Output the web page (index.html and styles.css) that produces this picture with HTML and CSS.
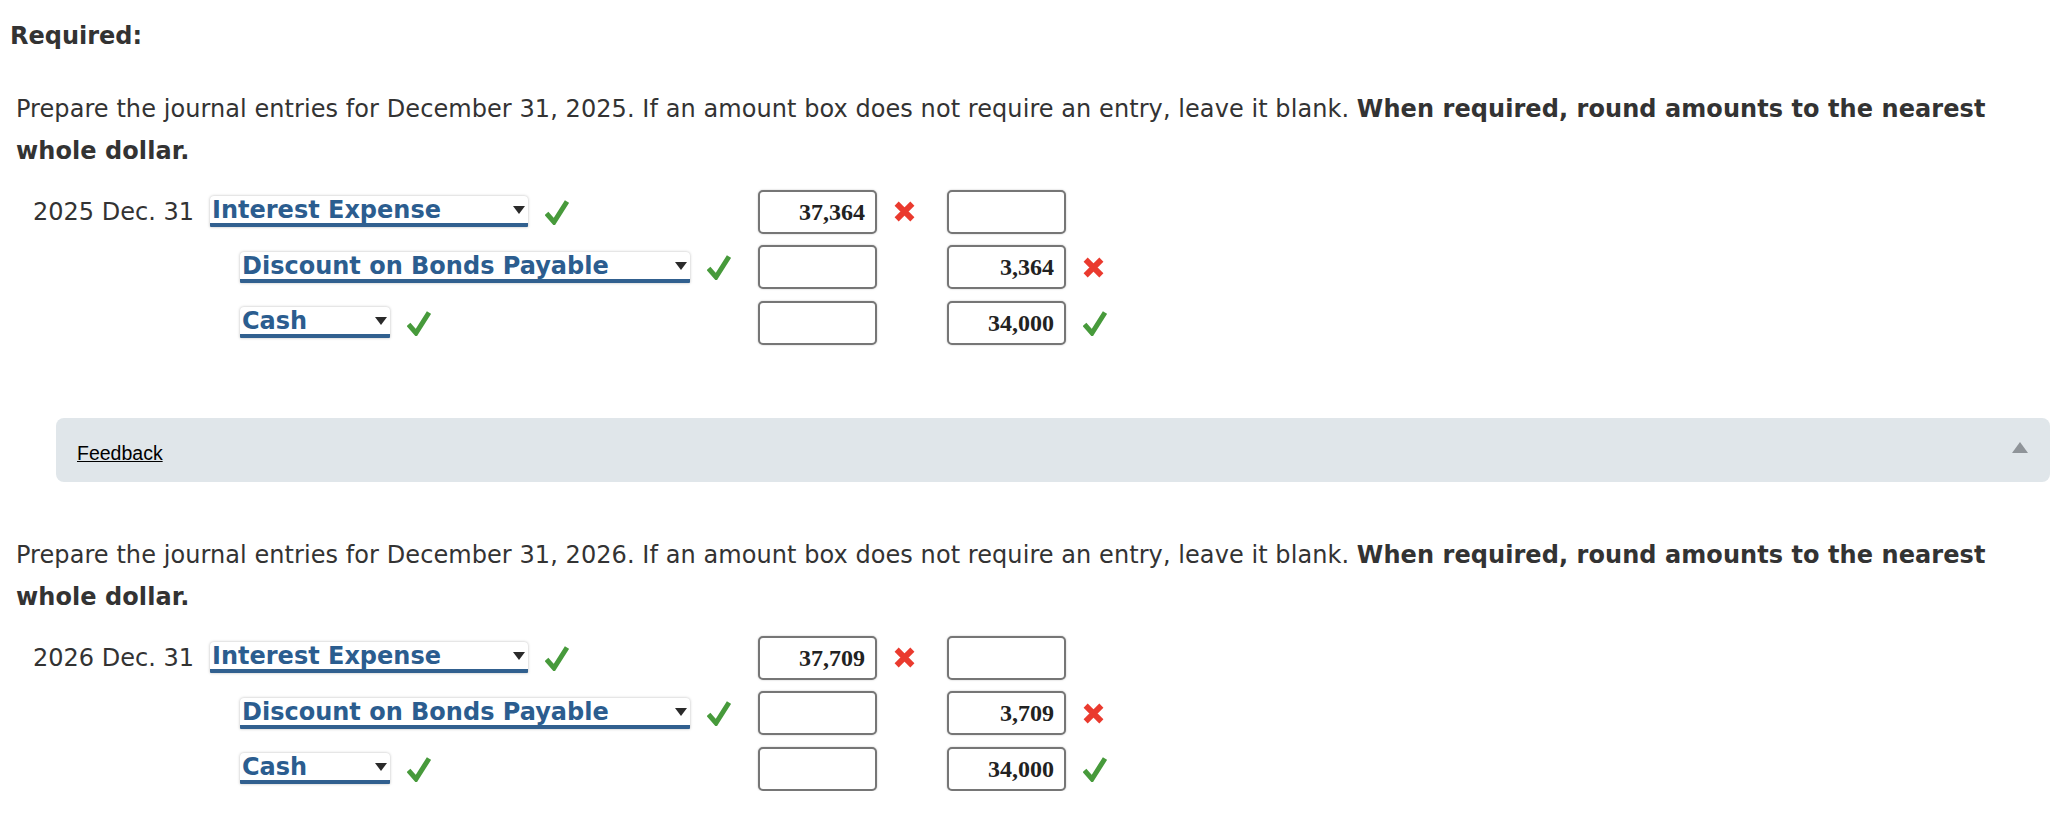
FILE: index.html
```html
<!DOCTYPE html>
<html lang="en">
<head>
<meta charset="utf-8">
<title>Journal entries</title>
<link rel="stylesheet" href="styles.css">
</head>
<body>
<div class="page">
  <h2 class="required">Required:</h2>

  <p class="instr">Prepare the journal entries for December 31, 2025. If an amount box does not require an entry, leave it blank. <b>When required, round amounts to the nearest whole dollar.</b></p>

  <div class="journal">
    <div class="date">2025 Dec. 31</div>
    <div class="acct"><span class="sel w-ie">Interest Expense<i class="arrow"></i></span><svg class="ok" viewBox="0 0 24 26"><path d="M1.5 14.5 L9 23 L22 2.5"/></svg></div>
    <div class="amt">37,364</div>
    <div class="mark"><svg class="bad" viewBox="0 0 20 20"><path d="M2.5 2.5 L17.5 17.5 M17.5 2.5 L2.5 17.5"/></svg></div>
    <div class="amt"></div>
    <div class="mark"></div>

    <div class="date"></div>
    <div class="acct credit"><span class="sel w-disc">Discount on Bonds Payable<i class="arrow"></i></span><svg class="ok" viewBox="0 0 24 26"><path d="M1.5 14.5 L9 23 L22 2.5"/></svg></div>
    <div class="amt"></div>
    <div class="mark"></div>
    <div class="amt">3,364</div>
    <div class="mark"><svg class="bad" viewBox="0 0 20 20"><path d="M2.5 2.5 L17.5 17.5 M17.5 2.5 L2.5 17.5"/></svg></div>

    <div class="date"></div>
    <div class="acct credit"><span class="sel w-cash">Cash<i class="arrow"></i></span><svg class="ok" viewBox="0 0 24 26"><path d="M1.5 14.5 L9 23 L22 2.5"/></svg></div>
    <div class="amt"></div>
    <div class="mark"></div>
    <div class="amt">34,000</div>
    <div class="mark"><svg class="ok" viewBox="0 0 24 26"><path d="M1.5 14.5 L9 23 L22 2.5"/></svg></div>
  </div>

  <div class="feedback">
    <a class="fb-link" href="#">Feedback</a>
    <span class="fb-toggle"></span>
  </div>

  <p class="instr">Prepare the journal entries for December 31, 2026. If an amount box does not require an entry, leave it blank. <b>When required, round amounts to the nearest whole dollar.</b></p>

  <div class="journal">
    <div class="date">2026 Dec. 31</div>
    <div class="acct"><span class="sel w-ie">Interest Expense<i class="arrow"></i></span><svg class="ok" viewBox="0 0 24 26"><path d="M1.5 14.5 L9 23 L22 2.5"/></svg></div>
    <div class="amt">37,709</div>
    <div class="mark"><svg class="bad" viewBox="0 0 20 20"><path d="M2.5 2.5 L17.5 17.5 M17.5 2.5 L2.5 17.5"/></svg></div>
    <div class="amt"></div>
    <div class="mark"></div>

    <div class="date"></div>
    <div class="acct credit"><span class="sel w-disc">Discount on Bonds Payable<i class="arrow"></i></span><svg class="ok" viewBox="0 0 24 26"><path d="M1.5 14.5 L9 23 L22 2.5"/></svg></div>
    <div class="amt"></div>
    <div class="mark"></div>
    <div class="amt">3,709</div>
    <div class="mark"><svg class="bad" viewBox="0 0 20 20"><path d="M2.5 2.5 L17.5 17.5 M17.5 2.5 L2.5 17.5"/></svg></div>

    <div class="date"></div>
    <div class="acct credit"><span class="sel w-cash">Cash<i class="arrow"></i></span><svg class="ok" viewBox="0 0 24 26"><path d="M1.5 14.5 L9 23 L22 2.5"/></svg></div>
    <div class="amt"></div>
    <div class="mark"></div>
    <div class="amt">34,000</div>
    <div class="mark"><svg class="ok" viewBox="0 0 24 26"><path d="M1.5 14.5 L9 23 L22 2.5"/></svg></div>
  </div>
</div>
</body>
</html>
```

FILE: styles.css
```css
html, body {
  margin: 0;
  padding: 0;
  background: #ffffff;
}

.page {
  font-family: Verdana, "DejaVu Sans", sans-serif;
  font-size: 24px;
  color: #333333;
  padding-top: 21px;
}

.required {
  margin: 0 0 0 10px;
  font-size: 24px;
  line-height: 30px;
  font-weight: bold;
  color: #333333;
}

.instr {
  margin: 37px 16px 0 16px;
  line-height: 42px;
  letter-spacing: 0.07px;
}

.instr b {
  font-weight: bold;
}

.journal {
  display: grid;
  grid-template-columns: 177px 548px 119px 70px 119px auto;
  grid-auto-rows: 44px;
  row-gap: 11.5px;
  align-items: center;
  margin: 17.5px 0 0 33px;
}

.date {
  white-space: nowrap;
}

.acct {
  display: flex;
  align-items: center;
  gap: 17px;
}

.acct.credit {
  padding-left: 30px;
}

.sel {
  position: relative;
  display: inline-block;
  box-sizing: border-box;
  height: 31px;
  line-height: 28px;
  padding-left: 2px;
  background: #ffffff;
  border-bottom: 4px solid #31608f;
  border-radius: 4px 4px 1px 1px;
  box-shadow: 0 0 3px rgba(0, 0, 0, 0.28);
  color: #2b5d8f;
  font-weight: bold;
  white-space: nowrap;
}

.w-ie { width: 318px; }
.w-disc { width: 450px; }
.w-cash { width: 150px; }

.arrow {
  position: absolute;
  right: 3px;
  top: 10px;
  width: 0;
  height: 0;
  border-left: 6px solid transparent;
  border-right: 6px solid transparent;
  border-top: 8px solid #2a2a2a;
}

.ok {
  width: 24px;
  height: 26px;
  flex: none;
  display: block;
}

.ok path {
  fill: none;
  stroke: #479a3b;
  stroke-width: 5;
}

.bad {
  width: 21px;
  height: 21px;
  display: block;
}

.bad path {
  fill: none;
  stroke: #ea3a2e;
  stroke-width: 5.5;
}

.amt {
  box-sizing: border-box;
  width: 119px;
  height: 44px;
  border: 2px solid #767676;
  border-radius: 5px;
  box-shadow: 0 0 2px rgba(0, 0, 0, 0.25);
  background: #ffffff;
  padding-right: 10px;
  text-align: right;
  font-family: "Times New Roman", "Liberation Serif", serif;
  font-weight: bold;
  font-size: 24px;
  line-height: 40px;
  color: #222222;
}

.mark {
  padding-left: 17px;
}

.feedback {
  display: flex;
  align-items: center;
  justify-content: space-between;
  box-sizing: border-box;
  height: 64px;
  margin: 73.5px 6px 0 56px;
  padding: 6px 22px 0 21px;
  background: #e0e6ea;
  border-radius: 8px;
}

.fb-link {
  font-family: Arial, "Liberation Sans", sans-serif;
  font-size: 19.5px;
  color: #000000;
  text-decoration: underline;
}

.fb-toggle {
  width: 0;
  height: 0;
  margin-bottom: 12px;
  border-left: 8px solid transparent;
  border-right: 8px solid transparent;
  border-bottom: 11px solid #8f9499;
}

.feedback + .instr {
  margin-top: 52px;
}
```
